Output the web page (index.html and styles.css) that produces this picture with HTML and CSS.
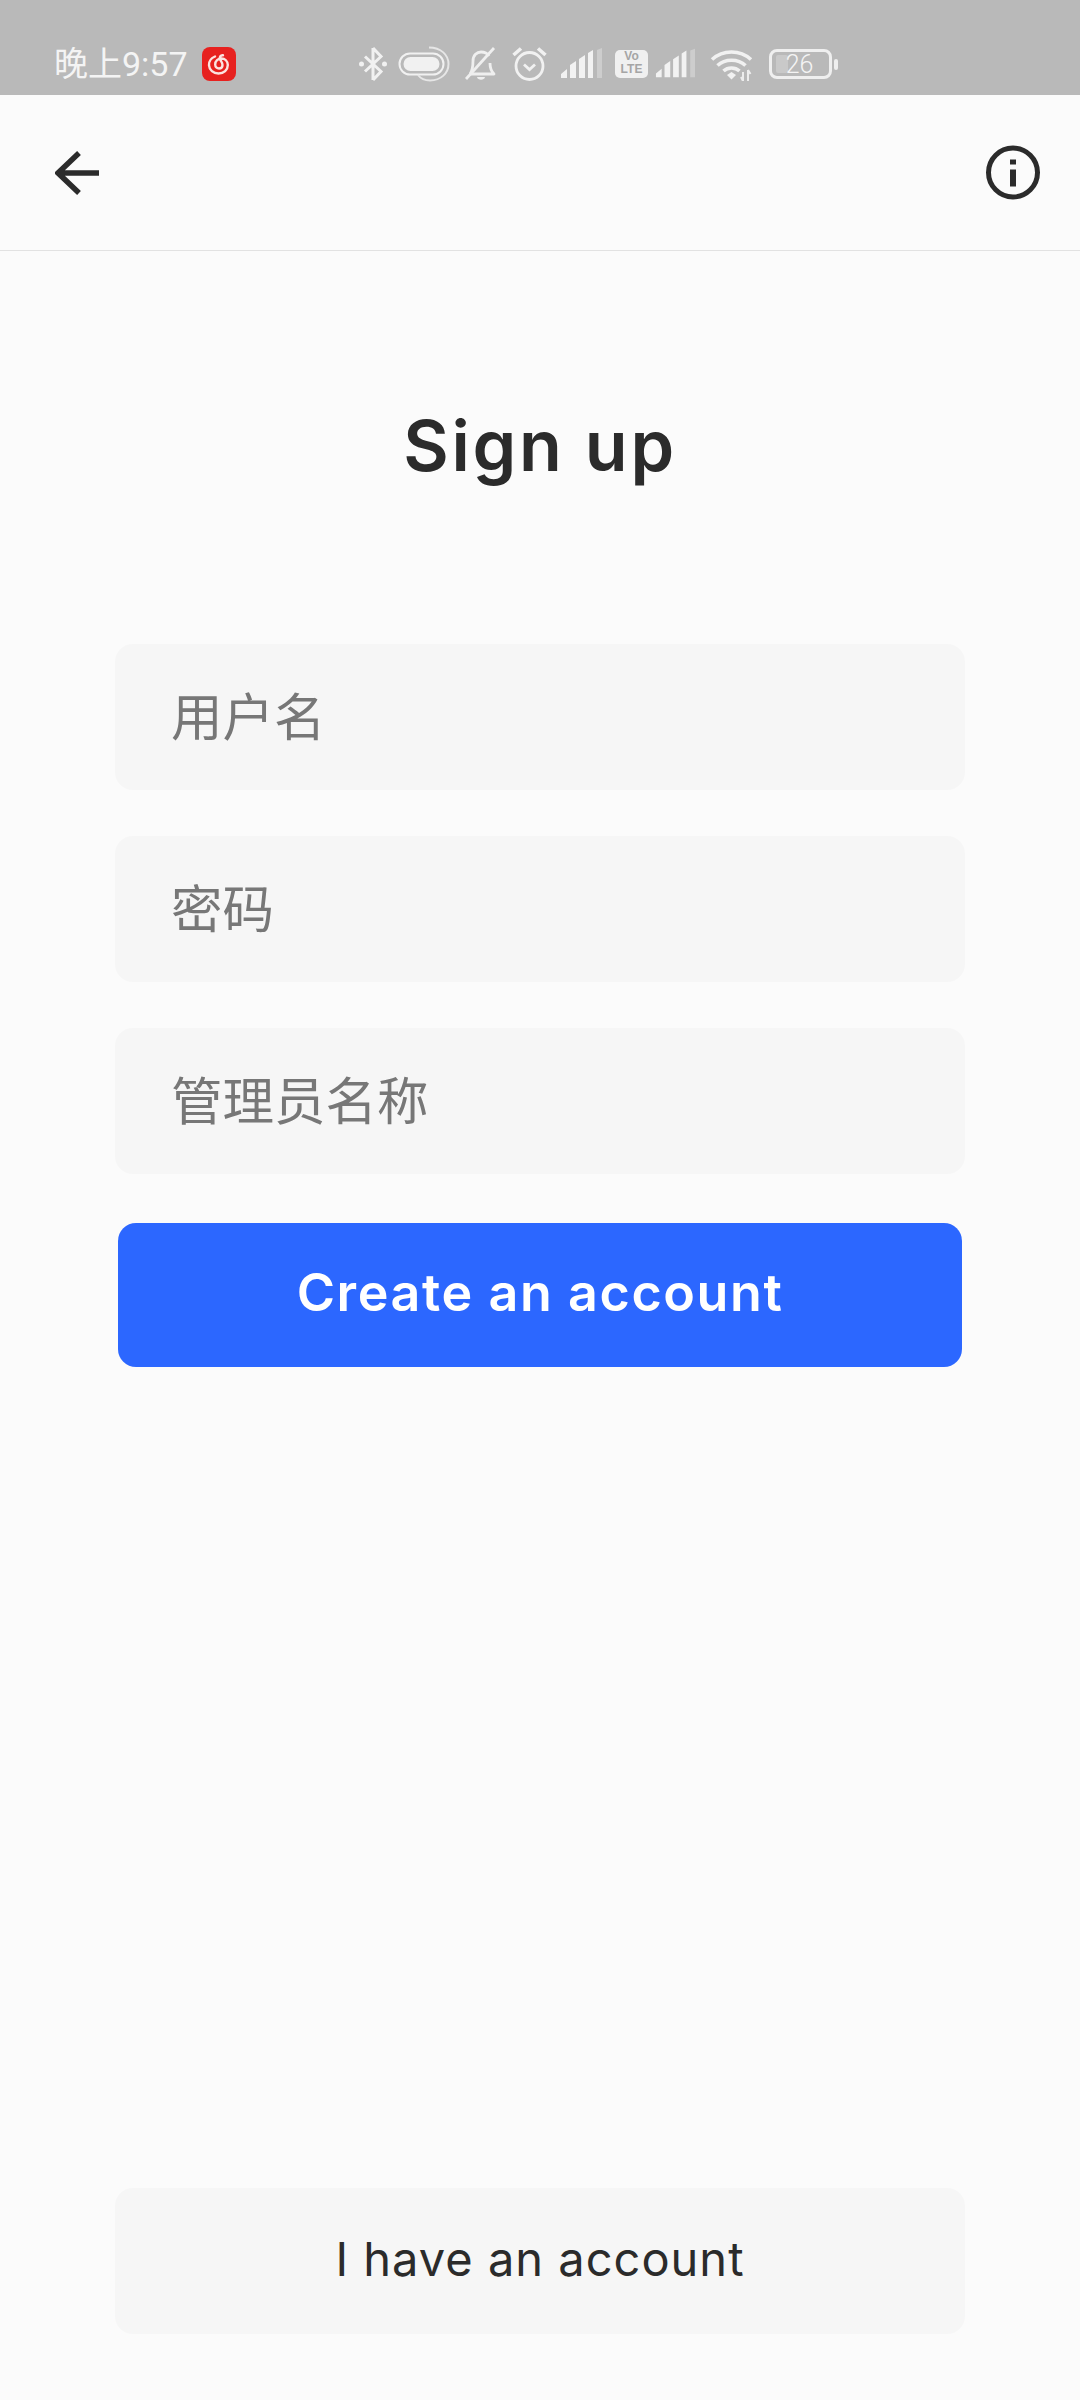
FILE: index.html
```html
<!DOCTYPE html>
<html>
<head>
    <meta charset="utf-8" />
    <title>Sign up</title>
    <link rel="stylesheet" href="styles.css">
</head>
<body>
    <section id="mainwrapper">
        <header class="statusbar">
            <span class="clock">晚上9:57</span>
            <svg class="appicon" width="34" height="34" viewBox="0 0 34 34">
                <rect width="34" height="34" rx="8" fill="#e7211f" />
                <path d="M13 9.5C8.8 11.300 6.800 14.600 7 18.200C7.300 23 11.300 26.500 16.500 26.500C21.800 26.500 25.800 22.800 25.800 18C25.800 14 22.800 11.500 19.500 11.500C16 11.500 13.200 14 13.200 17.500C13.200 19.800 15 21.500 17 21.500C19.200 21.500 20.500 19.900 20.500 18C20.500 15.500 18.700 14 18 12C17.400 10 18.500 8 21 8.300" fill="none" stroke="#fbe3e0" stroke-width="2.400" stroke-linecap="round" />
            </svg>
            <svg class="ic-bt" width="30" height="36" viewBox="0 0 30 36">
                <path d="M15 2V34M15 2L23 10.500L7 25.500M15 34L23 25.500L7 10.500" fill="none" stroke="#f1f1f1" stroke-width="3" />
                <circle cx="3.500" cy="18" r="2.500" fill="#f1f1f1" />
                <circle cx="26.500" cy="18" r="2.500" fill="#f1f1f1" />
            </svg>
            <svg class="ic-pill" width="52" height="36" viewBox="0 0 52 36">
                <rect x="1.500" y="7.500" width="44" height="21" rx="10.500" fill="none" stroke="#f1f1f1" stroke-width="2" />
                <rect x="5.500" y="11" width="36" height="14" rx="7" fill="#f1f1f1" />
                <path d="M31 1.500C43 1.500 50.500 9 50.500 18C50.500 27 43 34.500 32 34.500C27 34.500 23 33 20 29" fill="none" stroke="#e6e6e6" stroke-width="2" />
            </svg>
            <svg class="ic-bell" width="32" height="36" viewBox="0 0 32 36">
                <path d="M5 28C8 24 8 20 8 15C8 9 12 6 16 6C20 6 22.500 7.500 24 10M25 17C25 21 26 25 29 28H5" fill="none" stroke="#efefef" stroke-width="2.800" stroke-linejoin="round" />
                <path d="M1 33L29 2" stroke="#efefef" stroke-width="2.800" />
                <path d="M12 31H20C19.500 34.500 12.500 34.500 12 31Z" fill="#efefef" />
            </svg>
            <svg class="ic-alarm" width="35" height="36" viewBox="0 0 35 36">
                <circle cx="17.500" cy="20" r="13.500" fill="none" stroke="#f1f1f1" stroke-width="2.800" />
                <path d="M12 18.500L17.500 23.500L23 18.500" fill="none" stroke="#f1f1f1" stroke-width="2.800" />
                <path d="M1.500 9L9 2.500M33.500 9L26 2.500" stroke="#f1f1f1" stroke-width="3.600" />
            </svg>
            <svg class="ic-signal" width="42" height="30" viewBox="0 0 42 30">
                <path d="M1 30V26L7 21V30ZM10 30V17L16 13V30ZM19 30V11L25 7V30ZM28 30V5L33 2V30Z" fill="#f2f2f2" />
                <path d="M37 30V2L42 0V30Z" fill="#cdcdcd" />
            </svg>
            <span class="volte">Vo<br>LTE</span>
            <svg class="ic-signal2" width="40" height="30" viewBox="0 0 42 30">
                <path d="M1 30V26L7 21V30ZM10 30V17L16 13V30ZM19 30V11L25 7V30ZM28 30V5L33 2V30Z" fill="#f2f2f2" />
                <path d="M37 30V2L42 0V30Z" fill="#cdcdcd" />
            </svg>
            <svg class="ic-wifi" width="44" height="32" viewBox="0 0 44 32">
                <path d="M2 10.500C13 0.500 30 0.500 41 10.500M7.500 16.500C15 9.500 28 9.500 35.500 16.500M13.500 22C18 18 25 18 29.500 22" fill="none" stroke="#f1f1f1" stroke-width="3.600" />
                <path d="M17 26L21.500 23L26 26L21.500 30.500Z" fill="#f1f1f1" />
                <path d="M33 32V23M31 28L33 32M38 32V21M38 21L40.500 25" fill="none" stroke="#ededed" stroke-width="2" />
            </svg>
            <div class="battery">
                <div class="batterybody">
                    <span class="batteryfill"></span>
                    <span class="batterytext">26</span>
                </div>
                <span class="batterytip"></span>
            </div>
        </header>

        <nav class="navbar">
            <svg width="44" height="44" viewBox="0 0 44 44">
                <path d="M44 22H4M24 2L3 22L24 42" fill="none" stroke="#2b2b2b" stroke-width="5.500" />
            </svg>
            <svg width="56" height="56" viewBox="0 0 56 56">
                <circle cx="28" cy="27.500" r="24.500" fill="none" stroke="#2b2b2b" stroke-width="5" />
                <rect x="25" y="14.500" width="6" height="5" fill="#2b2b2b" />
                <rect x="25" y="24.500" width="6" height="17" fill="#2b2b2b" />
            </svg>
        </nav>

        <main class="content">
            <h1 class="title">Sign up</h1>
            <form class="fields">
                <input class="field" type="text" placeholder="用户名" />
                <input class="field" type="password" placeholder="密码" />
                <input class="field" type="text" placeholder="管理员名称" />
                <button class="primary" type="button">Create an account</button>
            </form>
            <button class="secondary" type="button">I have an account</button>
        </main>
    </section>
</body>
</html>
```

FILE: styles.css
```css
html,
body {
    margin: 0;
    padding: 0;
}

#mainwrapper {
    width: 1080px;
    height: 2400px;
    display: flex;
    flex-direction: column;
    background-color: #fbfbfb;
}

/* status bar */
.statusbar {
    height: 95px;
    box-sizing: border-box;
    padding: 46px 0 0 54px;
    display: flex;
    align-items: flex-start;
    background-color: #b9b9b9;
    color: #f4f4f4;
}

.clock {
    width: 148px;
    margin-top: -2px;
    font-family: "Roboto", "Noto Sans CJK SC", sans-serif;
    font-size: 34px;
    line-height: 40px;
    font-weight: 400;
    white-space: nowrap;
}

.appicon {
    margin-top: 1px;
}

.ic-bt {
    margin-left: 122px;
}

.ic-pill {
    margin-left: 10px;
}

.ic-bell {
    margin-left: 15px;
}

.ic-alarm {
    margin-left: 15px;
}

.ic-signal {
    margin: 2px 0 0 13px;
}

.volte {
    width: 33px;
    height: 28px;
    margin: 4px 0 0 13px;
    border-radius: 5px;
    background-color: #f0f0f0;
    color: #a5a5a5;
    font-family: "Liberation Sans", sans-serif;
    font-size: 12px;
    line-height: 13px;
    font-weight: bold;
    text-align: center;
}

.ic-signal2 {
    margin: 2px 0 0 7px;
}

.ic-wifi {
    margin: 3px 0 0 15px;
}

.battery {
    margin: 3px 0 0 15px;
    display: flex;
    align-items: center;
}

.batterybody {
    width: 63px;
    height: 30px;
    box-sizing: border-box;
    border: 3px solid #efefef;
    border-radius: 8px;
    position: relative;
    display: flex;
    justify-content: center;
    align-items: center;
}

.batteryfill {
    position: absolute;
    left: 4px;
    top: 3px;
    bottom: 3px;
    width: 12px;
    border-radius: 2px;
    background-color: #c9c9c9;
}

.batterytext {
    position: relative;
    left: -1px;
    font-family: "Roboto", sans-serif;
    font-size: 25px;
    font-weight: 300;
}

.batterytip {
    width: 4px;
    height: 11px;
    margin-left: 2px;
    border-radius: 2px;
    background-color: #efefef;
}

/* top nav */
.navbar {
    height: 156px;
    box-sizing: border-box;
    padding: 0 39px 0 55px;
    display: flex;
    justify-content: space-between;
    align-items: center;
    border-bottom: 1px solid #e2e2e2;
}

/* form */
.content {
    flex-grow: 1;
    box-sizing: border-box;
    padding: 0 115px 66px;
    display: flex;
    flex-direction: column;
}

.title {
    margin: 155px 0 158px;
    font-family: "Inter", sans-serif;
    font-size: 70px;
    line-height: 80px;
    font-weight: 600;
    letter-spacing: 2.7px;
    text-align: center;
    color: #2b2b2b;
}

.fields {
    display: flex;
    flex-direction: column;
    gap: 46px;
}

.field {
    height: 146px;
    box-sizing: border-box;
    padding: 0 56px 8px;
    border: 0;
    border-radius: 18px;
    background-color: #f6f6f6;
    font-family: "Noto Sans CJK SC", sans-serif;
    font-size: 51.500px;
    color: #2b2b2b;
}

.field::placeholder {
    color: #777777;
    opacity: 1;
}

.primary {
    height: 144px;
    margin: 3px 3px 0;
    padding-bottom: 6px;
    border: 0;
    border-radius: 18px;
    background-color: #2c67ff;
    color: #ffffff;
    font-family: "Inter", sans-serif;
    font-size: 52px;
    font-weight: 600;
    letter-spacing: 1.6px;
}

.secondary {
    height: 146px;
    margin-top: auto;
    padding-bottom: 6px;
    border: 0;
    border-radius: 18px;
    background-color: #f6f6f6;
    color: #2b2b2b;
    font-family: "Inter", sans-serif;
    font-size: 47px;
    font-weight: 400;
    letter-spacing: 1px;
}
```
